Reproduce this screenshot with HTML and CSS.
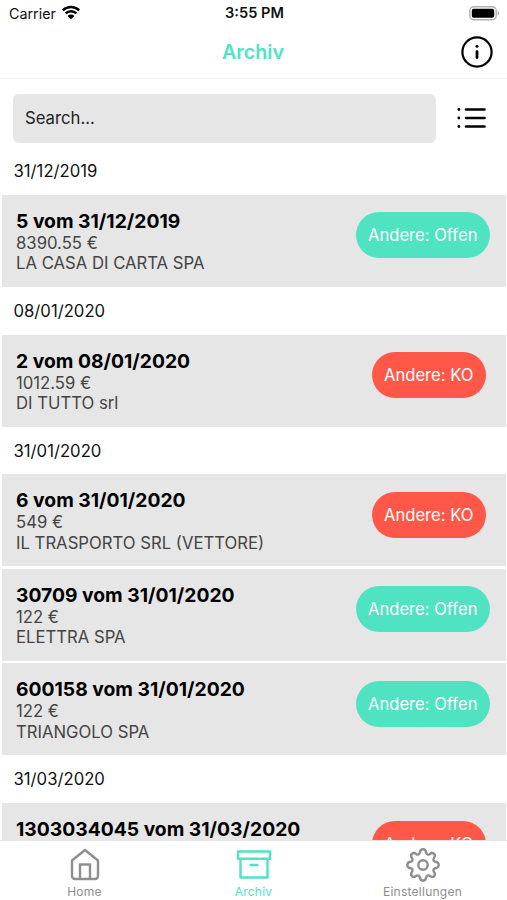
FILE: index.html
```
<!DOCTYPE html>
<html lang="de">
<head>
    <meta charset="UTF-8">
    <meta name="viewport" content="width=device-width, initial-scale=1.0">
    <title>Archiv</title>
    <link rel="stylesheet" href="styles.css">
</head>
<body>
    <div class="status-bar">
        <div class="carrier">
            <span class="carrier-name">Carrier</span>
            <svg class="wifi" width="20" height="15" viewBox="0 0 20 15">
                <path d="M1.8 5.4a11.8 11.8 0 0 1 16.4 0M4.6 8.4a7.8 7.8 0 0 1 10.8 0" fill="none" stroke="#000" stroke-width="2.5"/>
                <path d="M10 14.3L6.6 10.9a4.8 4.8 0 0 1 6.8 0z"/>
            </svg>
        </div>
        <span class="clock">3:55 PM</span>
        <svg class="battery" width="31" height="15" viewBox="0 0 31 15">
            <rect x="0.8" y="0.8" width="26.4" height="13" rx="4" fill="#fff" stroke="#b0b0b0" stroke-width="1.4"/>
            <rect x="2.8" y="2.8" width="22.4" height="9" rx="2"/>
            <path d="M28.7 5v4.6c2-.6 2-4 0-4.6z" fill="#b0b0b0"/>
        </svg>
    </div>

    <div class="header">
        <h1>Archiv</h1>
        <svg class="info" width="34" height="34" viewBox="0 0 34 34">
            <circle cx="17" cy="17" r="14.6" fill="none" stroke="#000" stroke-width="2.2"/>
            <circle cx="17" cy="11.3" r="1.5"/>
            <path d="M17 16.6v6" stroke="#000" stroke-width="2.8" stroke-linecap="round"/>
        </svg>
    </div>

    <div class="search-row">
        <input class="search" type="text" placeholder="Search...">
        <svg class="list-icon" width="30" height="22" viewBox="0 0 30 22">
            <path d="M9 2.5h18.5M9 11h18.500M9 19.5h18.5" stroke="#000" stroke-width="2.6" stroke-linecap="round"/>
            <circle cx="1.9" cy="2.5" r="1.4"/>
            <circle cx="1.9" cy="11" r="1.4"/>
            <circle cx="1.9" cy="19.5" r="1.4"/>
        </svg>
    </div>

    <div class="list">
        <h2 class="date">31/12/2019</h2>
        <div class="card">
            <div class="details">
                <h3>5 vom 31/12/2019</h3>
                <p>8390.55 €</p>
                <p>LA CASA DI CARTA SPA</p>
            </div>
            <span class="badge open">Andere: Offen</span>
        </div>

        <h2 class="date">08/01/2020</h2>
        <div class="card">
            <div class="details">
                <h3>2 vom 08/01/2020</h3>
                <p>1012.59 €</p>
                <p>DI TUTTO srl</p>
            </div>
            <span class="badge ko">Andere: KO</span>
        </div>

        <h2 class="date">31/01/2020</h2>
        <div class="card">
            <div class="details">
                <h3>6 vom 31/01/2020</h3>
                <p>549 €</p>
                <p>IL TRASPORTO SRL (VETTORE)</p>
            </div>
            <span class="badge ko">Andere: KO</span>
        </div>
        <div class="card">
            <div class="details">
                <h3>30709 vom 31/01/2020</h3>
                <p>122 €</p>
                <p>ELETTRA SPA</p>
            </div>
            <span class="badge open">Andere: Offen</span>
        </div>
        <div class="card">
            <div class="details">
                <h3>600158 vom 31/01/2020</h3>
                <p>122 €</p>
                <p>TRIANGOLO SPA</p>
            </div>
            <span class="badge open">Andere: Offen</span>
        </div>

        <h2 class="date">31/03/2020</h2>
        <div class="card">
            <div class="details">
                <h3>1303034045 vom 31/03/2020</h3>
            </div>
            <span class="badge ko">Andere: KO</span>
        </div>
    </div>

    <div class="tab-bar">
        <a class="tab">
            <svg width="36" height="36" viewBox="0 0 36 36">
                <path d="M18 3L31 13.5V29a3 3 0 0 1-3 3H8a3 3 0 0 1-3-3V13.5zM13 32V17.5h10V32"/>
            </svg>
            <span>Home</span>
        </a>
        <a class="tab active">
            <svg width="36" height="36" viewBox="0 0 36 36">
                <path d="M2 4.5h32v7.3H2zM4.500 11.8h27v18.7h-27zM14.5 18h7"/>
            </svg>
            <span>Archiv</span>
        </a>
        <a class="tab">
            <svg width="36" height="36" viewBox="0 0 36 36">
                <circle cx="18" cy="18" r="4.7"/>
                <path d="M18 2.300c2.300 0 3 1.500 3.200 3.500.3 1.600 2 2.300 3.400 1.400 1.700-1.300 3.200-1.600 4.500-.3s1 2.800-.3 4.500c-.9 1.400-.2 3.100 1.400 3.400 2 .2 3.500.9 3.500 3.200s-1.500 3-3.500 3.200c-1.600.3-2.300 2-1.400 3.400 1.300 1.700 1.600 3.200.3 4.500s-2.800 1-4.500-.3c-1.400-.9-3.100-.2-3.400 1.400-.2 2-.9 3.500-3.200 3.500s-3-1.500-3.200-3.500c-.3-1.600-2-2.300-3.400-1.400-1.700 1.300-3.200 1.600-4.500.3s-1-2.800.3-4.500c.9-1.400.2-3.100-1.400-3.400-2-.2-3.500-.9-3.500-3.200s1.500-3 3.500-3.200c1.600-.3 2.300-2 1.400-3.400-1.300-1.700-1.600-3.200-.3-4.500s2.800-1 4.500.3c1.400.9 3.100.2 3.400-1.400.2-2 .9-3.500 3.200-3.500z"/>
            </svg>
            <span>Einstellungen</span>
        </a>
    </div>
</body>
</html>
```
FILE: styles.css
```
* {
    box-sizing: border-box;
}
body {
    height: 100vh;
    margin: 0;
    font-family: Inter, 'Liberation Sans', sans-serif;
    background: #fff;
    color: #111;
    display: flex;
    flex-direction: column;
    overflow: hidden;
}
h1, h2, h3, p {
    margin: 0;
}
.status-bar {
    height: 26px;
    padding: 0 7px 0 9px;
    display: grid;
    grid-template-columns: 1fr auto 1fr;
    align-items: center;
    flex-shrink: 0;
}
.carrier {
    display: flex;
    align-items: center;
    gap: 5px;
    font-size: 14.3px;
}
.wifi {
    margin-top: -2px;
}
.clock {
    font-size: 14.6px;
    font-weight: 600;
}
.battery {
    justify-self: end;
}
.header {
    height: 53px;
    padding: 0 13px 0 12px;
    display: grid;
    grid-template-columns: 1fr auto 1fr;
    align-items: center;
    border-bottom: 1px solid #f0f0f0;
    flex-shrink: 0;
}
.header h1 {
    grid-column: 2;
    font-size: 19.7px;
    font-weight: 600;
    color: #50e3c2;
}
.info {
    justify-self: end;
}
.search-row {
    padding: 15px 20px 0 13px;
    display: flex;
    align-items: center;
    justify-content: space-between;
    flex-shrink: 0;
}
.search {
    width: 423px;
    height: 49px;
    padding: 0 12px 1px;
    border: none;
    border-radius: 6px;
    background: #e6e6e6;
    font-family: inherit;
    font-size: 16.7px;
}
.search::placeholder {
    color: #222;
}
.list-icon {
    margin-top: -2px;
}
.list {
    flex: 1;
    min-height: 0;
    padding: 4px 1px 0 2px;
    overflow: hidden;
}
.date {
    height: 47.8px;
    padding-left: 11.5px;
    font-size: 16.7px;
    font-weight: 400;
    line-height: 48px;
}
.card {
    height: 92px;
    padding: 15px 16px 0 14px;
    display: flex;
    justify-content: space-between;
    align-items: flex-start;
    background: #e6e6e6;
}
.card + .card {
    margin-top: 2.5px;
}
.card h3 {
    margin-bottom: 1px;
    font-size: 19.3px;
    font-weight: 700;
    line-height: 22px;
    color: #000;
}
.card p {
    font-size: 16.7px;
    line-height: 20.6px;
    color: #444;
}
.badge {
    height: 46px;
    margin-top: 2.5px;
    padding: 0 12.5px;
    border-radius: 23px;
    font-size: 16.6px;
    line-height: 46px;
    color: #fff;
}
.open {
    background: #50e3c2;
}
.ko {
    margin-right: 4px;
    background: #ff5848;
}
.tab-bar {
    height: 60px;
    border-top: 1px solid #e4e4e4;
    display: grid;
    grid-template-columns: repeat(3, 1fr);
    background: #fff;
    flex-shrink: 0;
}
.tab {
    padding-top: 6px;
    display: flex;
    flex-direction: column;
    align-items: center;
    gap: 1px;
    color: #8e8e8e;
    font-size: 12px;
    letter-spacing: 0.25px;
}
.tab svg {
    fill: none;
    stroke: currentColor;
    stroke-width: 2.4;
    stroke-linejoin: round;
    stroke-linecap: round;
}
.active {
    color: #50e3c2;
}
```
